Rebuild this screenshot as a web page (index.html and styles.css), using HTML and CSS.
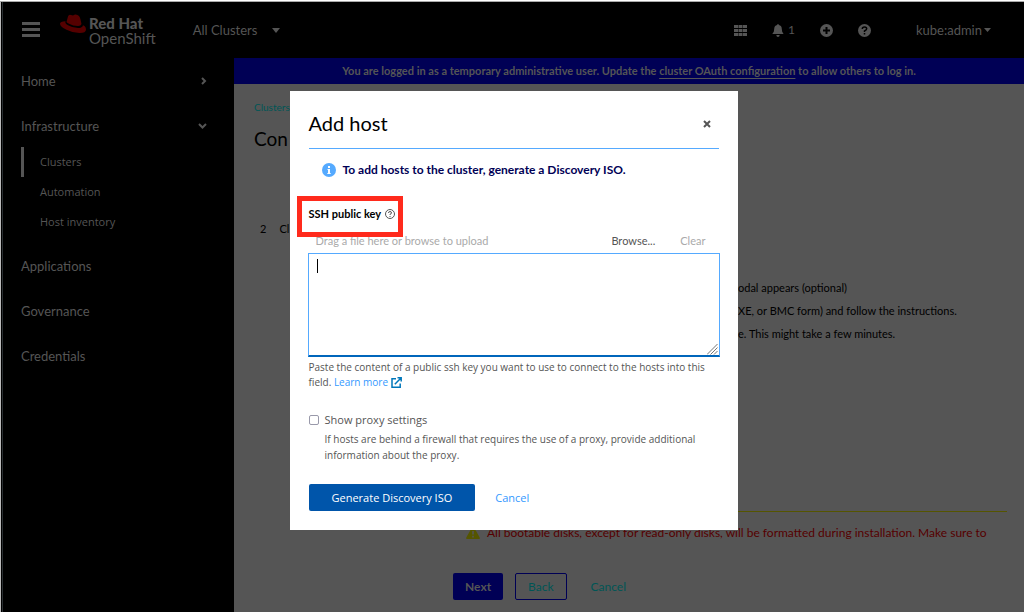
FILE: index.html
```html
<!DOCTYPE html>
<html lang="en">
<head>
<meta charset="utf-8">
<title>Red Hat OpenShift</title>
<link rel="stylesheet" href="styles.css">
</head>
<body>
<div class="shell">
  <header class="masthead">
    <button class="icon-button menu" aria-label="Menu"><svg width="18" height="16" viewBox="0 0 18 16" fill="currentColor"><path d="M0 0h18v3H0zM0 6h18v3H0zM0 12h18v3H0z"/></svg></button>
    <a class="brand" href="#">
      <svg width="27" height="21" viewBox="0 0 27 21"><path fill="#550000" d="M6.500 8 8 2.500Q8.700.300 11 1l2 .600L15 .500q2.500-.200 4 1.500 1 1.200 1.500 3.500L21.500 10q-.500 2-3.500 2-5 0-9-2.200Q6.800 8.800 6.500 8M5.300 8.500Q5.500 10 8 11.200 13 14 18 14q4.500 0 5-2.800L24.500 12q1.500 1.300 1.500 3.500 0 3.500-6.500 3.500-7 0-13-3.200Q0 12.500 0 9.700 0 7.600 5.500 7.200z"/></svg>
      <span class="brand-text"><strong>Red Hat</strong><span>OpenShift</span></span>
    </a>
    <button class="picker">All Clusters <svg width="8" height="5" viewBox="0 0 8 5" fill="currentColor"><path d="M0 0h8L4 5z"/></svg></button>
    <div class="tools">
      <button class="icon-button" aria-label="Applications"><svg width="13" height="11" viewBox="0 0 13 11" fill="currentColor"><path d="M0 0h4v3H0zM4.500 0h4v3h-4zM9 0h4v3H9zM0 4h4v3H0zM4.500 4h4v3h-4zM9 4h4v3H9zM0 8h4v3H0zM4.500 8h4v3h-4zM9 8h4v3H9z"/></svg></button>
      <button class="icon-button alerts"><svg width="12" height="13" viewBox="0 0 12 13" fill="currentColor"><path d="M6 0q.800 0 .800 1 3 .700 3 4 0 3 1.500 4.200.500.800-.400.800H1q-.900 0-.400-.800Q2.200 8 2.200 5q0-3.300 3-4Q5.200 0 6 0M4.300 11h3.400Q7.500 13 6 13t-1.700-2"/></svg><span>1</span></button>
      <button class="icon-button" aria-label="Add"><svg width="13" height="13" viewBox="0 0 13 13"><circle cx="6.500" cy="6.500" r="6.500" fill="currentColor"/><path d="M6.500 3v7M3 6.500h7" stroke="#000" stroke-width="2"/></svg></button>
      <button class="icon-button" aria-label="Help"><svg width="13" height="13" viewBox="0 0 13 13"><circle cx="6.500" cy="6.500" r="6.500" fill="currentColor"/><path d="M4.300 5q0-2 2.200-2t2.200 1.800Q8.700 6 6.500 7v1M6.500 9v1.500" fill="none" stroke="#000" stroke-width="1.500"/></svg></button>
    </div>
    <button class="user">kube:admin <svg width="7" height="4" viewBox="0 0 7 4" fill="currentColor"><path d="M0 0h7L3.500 4z"/></svg></button>
  </header>
  <div class="body">
    <nav class="sidebar">
      <a class="nav-item" href="#">Home <svg width="6" height="8" viewBox="0 0 6 8"><path d="m1 1 3 3-3 3" fill="none" stroke="currentColor" stroke-width="2"/></svg></a>
      <a class="nav-item" href="#">Infrastructure <svg width="9" height="6" viewBox="0 0 9 6"><path d="m1 1 3.500 3.500L8 1" fill="none" stroke="currentColor" stroke-width="2"/></svg></a>
      <div class="subnav">
        <a class="active" href="#">Clusters</a>
        <a href="#">Automation</a>
        <a href="#">Host inventory</a>
      </div>
      <a class="nav-item" href="#">Applications</a>
      <a class="nav-item" href="#">Governance</a>
      <a class="nav-item" href="#">Credentials</a>
    </nav>
    <main class="main">
      <p class="banner">You are logged in as a temporary administrative user. Update the <a href="#">cluster OAuth configuration</a> to allow others to log in.</p>
      <div class="page">
        <a class="breadcrumb" href="#">Clusters</a>
        <h1>Con</h1>
        <div class="step"><span>2</span><span>Cl</span></div>
        <ul class="instructions">
          <li>odal appears (optional)</li>
          <li>XE, or BMC form) and follow the instructions.</li>
          <li>e. This might take a few minutes.</li>
        </ul>
        <div class="warning">
          <svg width="14" height="12" viewBox="0 0 14 12"><path d="M7 0q.800 0 1.200.700L13.700 10.500Q14.300 12 13 12H1Q-.300 12 .300 10.500L5.800.700Q6.200 0 7 0" fill="#555500"/><path d="M7 4v3.500M7 8.800v1.700" stroke="#555" stroke-width="1.600"/></svg>
          <span>All bootable disks, except for read-only disks, will be formatted during installation. Make sure to</span>
        </div>
        <footer class="wizard-actions">
          <button class="next">Next</button>
          <button class="back">Back</button>
          <button class="cancel">Cancel</button>
        </footer>
      </div>
    </main>
  </div>
  <div class="backdrop">
    <form class="modal" role="dialog" aria-labelledby="modal-title">
      <header class="modal-head">
        <h2 id="modal-title">Add host</h2>
        <button type="button" class="close" aria-label="Close"><svg width="8" height="8" viewBox="0 0 8 8"><path d="m1 1 6 6M7 1 1 7" stroke="currentColor" stroke-width="2"/></svg></button>
      </header>
      <div class="info">
        <svg width="14" height="14" viewBox="0 0 14 14"><circle cx="7" cy="7" r="7" fill="#55aaff"/><path d="M6 3h2v2H6zM5.500 6H8v4h.700v1H5.300v-1H6V7h-.500z" fill="#fff"/></svg>
        <strong>To add hosts to the cluster, generate a Discovery ISO.</strong>
      </div>
      <div class="key-label">
        <label for="ssh-key">SSH public key</label>
        <svg width="10" height="10" viewBox="0 0 10 10" fill="none" stroke="#555"><circle cx="5" cy="5" r="4.500"/><path d="M3.500 4q0-1.500 1.500-1.500T6.500 4Q6.500 4.800 5 5.300V6M5 7v1"/></svg>
        <span class="highlight"></span>
      </div>
      <div class="upload">
        <input class="filename" type="text" placeholder="Drag a file here or browse to upload" aria-label="File name" readonly>
        <button type="button">Browse...</button>
        <button type="button" class="clear" disabled>Clear</button>
      </div>
      <div class="key-box">
        <textarea id="ssh-key"></textarea>
        <span class="caret"></span>
        <svg class="grip" width="11" height="11" viewBox="0 0 11 11"><path d="M0 10.500 10.500 0M3.500 10.500l7-7M7 10.500 10.500 7" stroke="#777"/></svg>
      </div>
      <p class="helper">Paste the content of a public ssh key you want to use to connect to the hosts into this field. <a href="#">Learn more<svg width="11" height="11" viewBox="0 0 11 11" fill="none" stroke="#0077bb" stroke-width="1.500"><path d="M5 1.700H1v8.500h8.200V6.500M3.800 7.200 9.500 1.500M6.500.800h3.700v3.700"/></svg></a></p>
      <div class="proxy">
        <input type="checkbox" id="proxy">
        <label for="proxy">Show proxy settings</label>
        <p>If hosts are behind a firewall that requires the use of a proxy, provide additional information about the proxy.</p>
      </div>
      <footer class="modal-actions">
        <button type="button" class="primary">Generate Discovery ISO</button>
        <button type="button" class="link">Cancel</button>
      </footer>
    </form>
  </div>
</div>
</body>
</html>
```
FILE: styles.css
```css
* { box-sizing: border-box; }
body {
  margin: 0;
  font-family: Lato, "Liberation Sans", sans-serif;
  font-size: 12px;
  line-height: 16px;
  color: #555;
  background: #000;
}
h1, h2, p, ul { margin: 0; padding: 0; font-weight: 400; }
ul { list-style: none; }
svg { display: block; flex: none; }
a { color: inherit; text-decoration: none; }
button {
  padding: 0;
  border: 0;
  background: none;
  font: inherit;
  color: inherit;
}
.shell {
  position: relative;
  display: flex;
  flex-direction: column;
  min-height: 100vh;
  padding: 2px 0 0 3px;
  background:
    linear-gradient(#fff 1px, #aaa 1px) top / 100% 2px no-repeat,
    linear-gradient(90deg, #bbb 1px, #000 1px, #000 2px, #2b3033 2px) left / 3px 100% no-repeat,
    #000;
}
.masthead {
  display: flex;
  align-items: center;
  height: 56px;
  padding: 0 33px 0 19px;
  font-size: 13px;
}
.icon-button, .picker, .user { display: flex; align-items: center; }
.brand { display: flex; gap: 2px; margin-left: 20px; }
.brand-text { display: flex; flex-direction: column; font-size: 15px; line-height: 15px; padding-top: 2px; }
.brand-text strong { font-weight: 900; }
.picker { gap: 15px; margin-left: 37px; }
.tools { display: flex; align-items: center; gap: 25px; margin-left: auto; margin-right: 45px; }
.alerts { gap: 4px; font-size: 12px; }
.user { gap: 2px; }
.body { display: flex; flex: 1; }
.sidebar { flex: none; width: 231px; font-size: 13px; }
.nav-item {
  display: flex;
  align-items: center;
  justify-content: space-between;
  height: 45px;
  padding: 0 27px 0 18px;
}
.subnav { margin-top: -1px; padding-bottom: 6px; font-family: "Open Sans", sans-serif; font-size: 11px; }
.subnav a { display: block; margin-left: 18px; padding-left: 16px; line-height: 30px; border-left: 3px solid transparent; }
.subnav .active { border-color: #555; }
.main { flex: 1; display: flex; flex-direction: column; background: #555; color: #000; }
.banner { line-height: 26px; text-align: center; font-size: 11px; font-weight: 700; color: #555; background: #000055; }
.banner a { text-decoration: underline; text-underline-offset: 3px; }
.page { padding: 15px 17px 12px 20px; }
.breadcrumb { display: block; font-size: 10px; color: #005555; }
.page h1 { margin-top: 12px; font-size: 19px; line-height: 24px; }
.step { display: flex; gap: 13px; padding: 70px 0 0 6px; font-size: 11px; }
.instructions { padding: 39px 0 0 484px; font-size: 11px; line-height: 23px; white-space: nowrap; }
.warning {
  display: flex;
  align-items: center;
  gap: 7px;
  margin: 166px 0 0 199px;
  padding: 13px 0 12px 13px;
  border-top: 1px solid #555500;
  font-size: 12px;
  color: #550000;
  white-space: nowrap;
}
.wizard-actions { display: flex; gap: 12px; margin: 20px 0 0 199px; }
.wizard-actions button { height: 27px; padding: 0 12px; border-radius: 2px; }
.wizard-actions .next { background: #000055; color: #555; font-weight: 700; }
.wizard-actions .back { border: 1px solid #000055; color: #005555; }
.wizard-actions .cancel { color: #005555; }
.backdrop {
  position: absolute;
  inset: 0 0 0 3px;
  display: flex;
  align-items: flex-start;
  justify-content: center;
  padding-top: 91px;
}
.modal { width: 448px; padding: 20px 19px 19px; background: #fff; }
.modal-head {
  display: flex;
  align-items: center;
  justify-content: space-between;
  padding: 0 8px 12px 0;
  border-bottom: 1px solid #55aaff;
}
.modal-head h2 { font-size: 20px; line-height: 25px; color: #000; }
.info { display: flex; align-items: center; gap: 7px; padding: 13px; font-size: 12px; color: #000055; }
.key-label {
  position: relative;
  display: flex;
  align-items: center;
  gap: 4px;
  margin-top: 15px;
  font-size: 11px;
  font-weight: 700;
  color: #000;
}
.highlight {
  position: absolute;
  left: -12px;
  top: -10px;
  width: 106px;
  height: 41px;
  border: 5px solid #ff2a1c;
}
.upload { display: flex; gap: 25px; padding: 11px 13px 4px 7px; font-size: 11px; }
.filename {
  flex: 1;
  min-width: 0;
  height: 16px;
  padding: 0;
  border: 0;
  font: inherit;
  background: none;
}
.filename::placeholder { color: #aaa; opacity: 1; }
.upload .clear { color: #aaa; }
.key-box { position: relative; margin: 0 -1px; }
.key-box textarea {
  display: block;
  width: 100%;
  height: 104px;
  padding: 5px 8px;
  border: 1px solid #55aaff;
  border-bottom: 2px solid #0066bb;
  font: inherit;
  background: #fff;
  resize: none;
  outline: 0;
}
.caret { position: absolute; left: 9px; top: 6px; width: 1px; height: 14px; background: #000; }
.grip { position: absolute; right: 2px; bottom: 2px; }
.helper { padding-top: 3px; font-family: "Open Sans", sans-serif; font-size: 10px; line-height: 15px; }
.helper a { color: #3399ff; }
.helper svg { display: inline-block; margin-left: 3px; vertical-align: -2px; }
.proxy {
  display: grid;
  grid-template-columns: 11px 1fr;
  column-gap: 5px;
  align-items: center;
  padding-top: 22px;
  font-family: "Open Sans", sans-serif;
  font-size: 11px;
}
.proxy input {
  appearance: none;
  width: 10px;
  height: 10px;
  margin: 0;
  border: 1px solid #9999aa;
  border-radius: 2px;
}
.proxy p { grid-column: 2; padding-top: 3px; font-size: 10px; }
.modal-actions { display: flex; gap: 20px; padding-top: 21px; font-family: "Open Sans", sans-serif; font-size: 11px; }
.primary { height: 27px; padding: 0 23px; border-radius: 2px; color: #fff; background: #0055aa; }
.modal-actions .link { color: #3399ff; }
```
